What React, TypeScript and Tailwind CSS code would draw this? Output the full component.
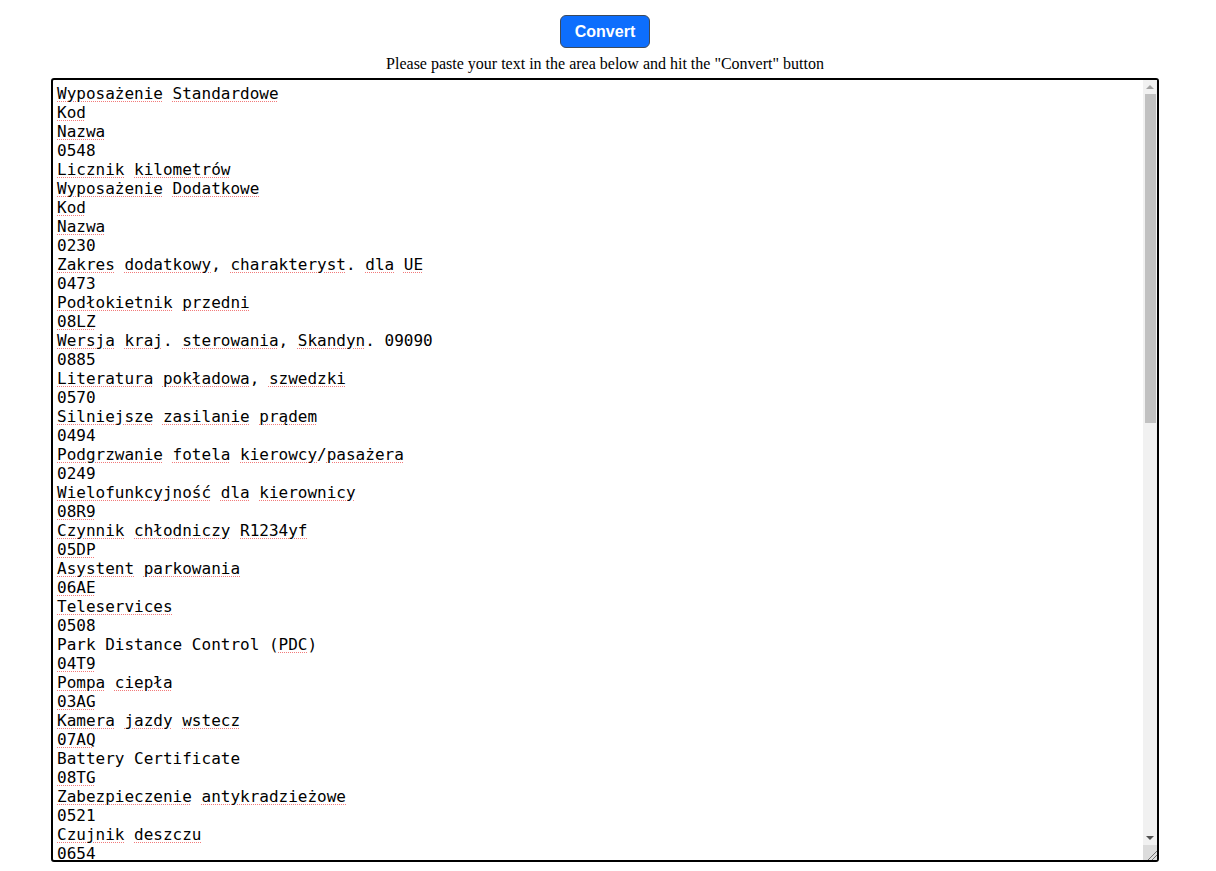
import React, { useState } from 'react';

const lines = [
  'Wyposażenie Standardowe',
  'Kod',
  'Nazwa',
  '0548',
  'Licznik kilometrów',
  'Wyposażenie Dodatkowe',
  'Kod',
  'Nazwa',
  '0230',
  'Zakres dodatkowy, charakteryst. dla UE',
  '0473',
  'Podłokietnik przedni',
  '08LZ',
  'Wersja kraj. sterowania, Skandyn. 09090',
  '0885',
  'Literatura pokładowa, szwedzki',
  '0570',
  'Silniejsze zasilanie prądem',
  '0494',
  'Podgrzwanie fotela kierowcy/pasażera',
  '0249',
  'Wielofunkcyjność dla kierownicy',
  '08R9',
  'Czynnik chłodniczy R1234yf',
  '05DP',
  'Asystent parkowania',
  '06AE',
  'Teleservices',
  '0508',
  'Park Distance Control (PDC)',
  '04T9',
  'Pompa ciepła',
  '03AG',
  'Kamera jazdy wstecz',
  '07AQ',
  'Battery Certificate',
  '08TG',
  'Zabezpieczenie antykradzieżowe',
  '0521',
  'Czujnik deszczu',
  '0654',
  'Automatyczna klimatyzacja',
  '0534',
  'Reflektory LED',
  '05AC',
  'Ostrzeżenie przed opuszczeniem pasa ruchu',
  '06AK',
  'Tempomat aktywny',
  '0544',
  'Ogranicznik prędkości',
  '0563',
  'Fotele przednie sportowe',
  '0481',
  'Lusterka zewn. składane elektrycznie',
  '0430',
  'Lusterko wewn. automatycznie przyciemniane',
  '0431',
  'Pakiet oświetlenia',
  '0609',
  'Radio DAB',
  '06NS',
  'Złącze USB',
  '0698',
  'Interfejs telefonu komórkowego',
  '06AC',
  'Połączenie alarmowe',
  '0710',
  'Kierownica sportowa',
  '0850',
  'Wersja krajowa',
  '0879',
  'Literatura pokładowa',
  '0925',
  'Pakiet serwisowy',
  '0988',
  'Wykonanie zamówienia',
];

// words the (english) spell checker accepts
const known = new Set(['Park', 'Distance', 'Control', 'Battery', 'Certificate', 'Radio', 'LED', 'USB']);

function flagged(word: string): boolean {
  return /\p{L}/u.test(word) && !known.has(word);
}

// red dotted "spelling" marks, drawn under the transparent textarea
function SpellLayer({ text }: { text: string }) {
  const parts = text.split(/([\p{L}\p{N}]+)/u);
  return (
    <div
      aria-hidden
      className="pointer-events-none absolute inset-0 overflow-hidden border-2 border-transparent px-[4px] pt-[4px] pr-[18px] font-['DejaVu_Sans_Mono',monospace] text-[16px] leading-[19px] whitespace-pre-wrap text-transparent"
    >
      {parts.map((p, i) =>
        i % 2 === 1 && flagged(p) ? (
          <span
            key={i}
            className="underline decoration-[#f27a7a] decoration-dotted decoration-[1px] underline-offset-[2px]"
          >
            {p}
          </span>
        ) : (
          <React.Fragment key={i}>{p}</React.Fragment>
        ),
      )}
    </div>
  );
}

// headless browser hides native scrollbars, so the classic one is drawn over the textarea
function FakeScrollbar() {
  return (
    <div className="pointer-events-none absolute top-[2px] right-[2px] bottom-[2px] flex w-[14px] flex-col bg-[#f1f1f1]">
      <div className="flex h-[14px] items-center justify-center">
        <div className="h-0 w-0 border-x-[4px] border-b-[4px] border-x-transparent border-b-[#a3a3a3]" />
      </div>
      <div className="flex-1">
        <div className="ml-[2px] mr-[1px] h-[329px] bg-[#c1c1c1]" />
      </div>
      <div className="flex h-[14px] items-center justify-center">
        <div className="h-0 w-0 border-x-[4px] border-t-[4px] border-x-transparent border-t-[#505050]" />
      </div>
      <div className="h-[15px] bg-[#dcdcdc]">
        <svg width="14" height="15" viewBox="0 0 14 15">
          <line x1="14" y1="6" x2="5" y2="15" stroke="#6f6f6f" strokeWidth="1" />
          <line x1="14" y1="10" x2="9" y2="15" stroke="#6f6f6f" strokeWidth="1" />
        </svg>
      </div>
    </div>
  );
}

const App: React.FC = () => {
  const [text, setText] = useState(lines.join('\n'));
  return (
    <div className="w-full bg-white font-['Liberation_Serif',serif] text-black">
      <div className="flex w-[1210px] flex-col items-center pt-[15px]">
        <button className="rounded-[6px] border border-[#3d4a5c] bg-[#0d6efd] px-[14px] py-[7px] font-['Liberation_Sans',Arial,sans-serif] text-[16px] leading-[17px] font-bold text-white">
          Convert
        </button>
        <p className="mt-[7px] text-[16px] leading-[18px]">
          Please paste your text in the area below and hit the "Convert" button
        </p>
      </div>
      <div className="relative mt-[5px] ml-[51px] h-[784px] w-[1108px] bg-white">
        <SpellLayer text={text} />
        <textarea
          spellCheck={false}
          className="relative block h-full w-full resize-none overflow-hidden rounded-[3px] border-2 border-black bg-transparent px-[4px] pt-[4px] pr-[18px] pb-[2px] font-['DejaVu_Sans_Mono',monospace] text-[16px] leading-[19px] text-black outline-none"
          value={text}
          onChange={e => setText(e.target.value)}
        />
        <FakeScrollbar />
      </div>
    </div>
  );
};

export default App;
